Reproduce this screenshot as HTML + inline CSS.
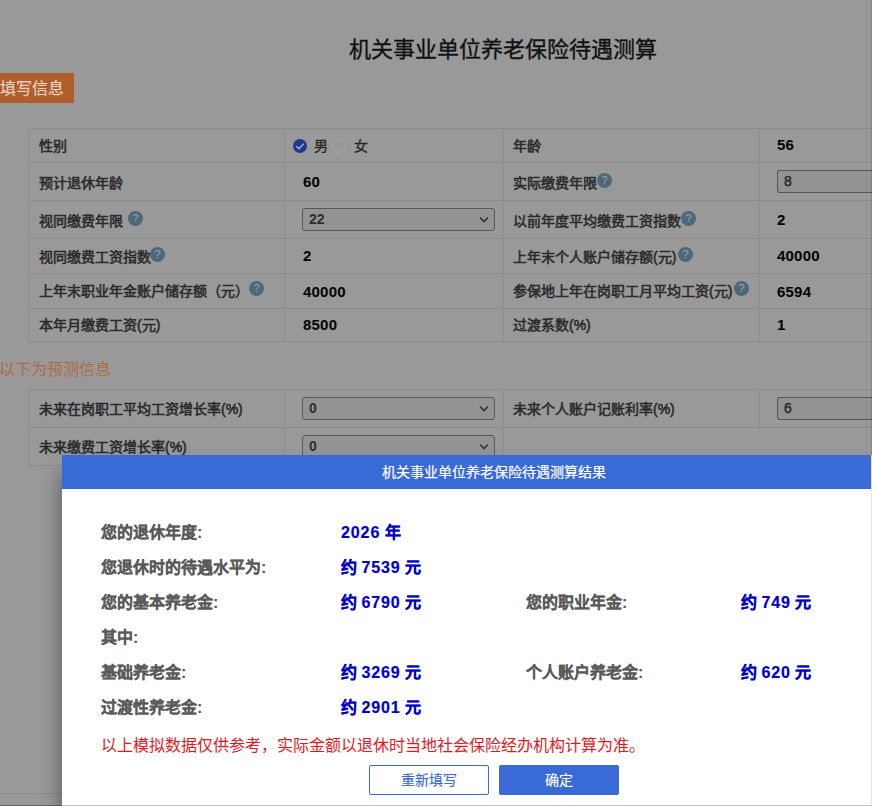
<!DOCTYPE html>
<html lang="zh-CN"><head><meta charset="utf-8">
<style>
*{margin:0;padding:0;box-sizing:border-box}
html,body{width:872px;height:806px;overflow:hidden;background:#999;font-family:"Liberation Sans",sans-serif}
.abs{position:absolute}
#title{left:349px;top:35px;font-size:22px;line-height:30px;color:#111;-webkit-text-stroke:0.35px #111;white-space:nowrap}
#tag{left:0;top:73px;width:74px;height:30px;background:#b15d2c;color:#e2d2c4;-webkit-text-stroke:0.2px #e2d2c4;font-size:16px;line-height:30px;white-space:nowrap}
#tag span{position:absolute;left:0;top:1px}
.sub{left:-1px;top:357px;font-size:16px;line-height:26px;color:#b06a46;white-space:nowrap}
.hl{background:#8c8c8c}
.vl{background:#8c8c8c}
.lbl{position:absolute;font-size:14px;font-weight:normal;color:#2a2a2a;-webkit-text-stroke:0.55px #2a2a2a;white-space:nowrap;line-height:20px}
.val{position:absolute;font-size:15px;font-weight:bold;color:#000;white-space:nowrap;line-height:20px;letter-spacing:0.2px}
.sel{position:absolute;width:193px;height:23px;border:1px solid #585858;border-radius:3px;background:#939393}
.sel span{position:absolute;left:6px;top:1px;font-size:14px;font-weight:bold;color:#2e2e2e;line-height:18px}
.sel svg{position:absolute;right:5px;top:7px}
.inp{position:absolute;width:120px;height:23px;border:1px solid #555;border-right:none;border-radius:3px 0 0 3px;background:#939393}
.inp span{position:absolute;left:6px;top:1px;font-size:14px;color:#2a2a2a;-webkit-text-stroke:0.5px #2a2a2a;line-height:18px}
.q{position:absolute;width:15px;height:15px;border-radius:50%;background:#4d6876;color:#93a8b3;font-size:11px;font-weight:normal;text-align:center;line-height:15px}
#modal{left:62px;top:455px;width:900px;height:350px;background:#fff;box-shadow:0 18px 20px rgba(0,0,0,0.45)}
#mhead{position:absolute;left:0;top:0;width:100%;height:34px;background:#3a6ad6}
#mtitle{position:absolute;left:320px;top:7px;font-size:14px;line-height:20px;color:#fff;-webkit-text-stroke:0.2px #fff;white-space:nowrap}
.ml{position:absolute;font-size:16px;font-weight:bold;color:#5a5a5a;-webkit-text-stroke:0.15px #5a5a5a;white-space:nowrap;line-height:22px}
.mv{position:absolute;font-size:16px;font-weight:bold;color:#0000cc;-webkit-text-stroke:0.2px #0000cc;white-space:nowrap;line-height:22px}
#note{left:39px;top:280px;font-size:16px;color:#e0191e;white-space:nowrap;line-height:22px}
.btn{position:absolute;top:310px;width:120px;height:30px;font-size:14px;line-height:30px;text-align:center;border-radius:2px;-webkit-text-stroke:0.15px currentColor}
.d{letter-spacing:0.9px}
</style></head><body>
<div id="title" class="abs">机关事业单位养老保险待遇测算</div>
<div id="tag" class="abs"><span>填写信息</span></div>

<!-- table 1 lines -->
<div class="abs hl" style="left:28px;top:128px;width:844px;height:1px"></div>
<div class="abs hl" style="left:28px;top:162px;width:844px;height:1px"></div>
<div class="abs hl" style="left:28px;top:200px;width:844px;height:1px"></div>
<div class="abs hl" style="left:28px;top:238px;width:844px;height:1px"></div>
<div class="abs hl" style="left:28px;top:273px;width:844px;height:1px"></div>
<div class="abs hl" style="left:28px;top:308px;width:844px;height:1px"></div>
<div class="abs hl" style="left:28px;top:341px;width:844px;height:1px"></div>
<div class="abs vl" style="left:28px;top:128px;width:1px;height:214px"></div>
<div class="abs vl" style="left:284px;top:128px;width:1px;height:214px"></div>
<div class="abs vl" style="left:503px;top:128px;width:1px;height:214px"></div>
<div class="abs vl" style="left:759px;top:128px;width:1px;height:214px"></div>

<div class="lbl" style="left:39px;top:136px">性别</div>
<div class="lbl" style="left:39px;top:173px">预计退休年龄</div>
<div class="lbl" style="left:39px;top:211px">视同缴费年限</div>
<div class="lbl" style="left:39px;top:247px">视同缴费工资指数</div>
<div class="lbl" style="left:39px;top:281px">上年末职业年金账户储存额（元）</div>
<div class="lbl" style="left:39px;top:315px">本年月缴费工资(元)</div>

<div class="lbl" style="left:513px;top:136px">年龄</div>
<div class="lbl" style="left:513px;top:173px">实际缴费年限</div>
<div class="lbl" style="left:513px;top:211px">以前年度平均缴费工资指数</div>
<div class="lbl" style="left:513px;top:247px">上年末个人账户储存额(元)</div>
<div class="lbl" style="left:513px;top:281px">参保地上年在岗职工月平均工资(元)</div>
<div class="lbl" style="left:513px;top:315px">过渡系数(%)</div>

<div class="q" style="left:128px;top:211px">?</div>
<div class="q" style="left:597px;top:173px">?</div>
<div class="q" style="left:681px;top:211px">?</div>
<div class="q" style="left:150px;top:247px">?</div>
<div class="q" style="left:678px;top:247px">?</div>
<div class="q" style="left:249px;top:281px">?</div>
<div class="q" style="left:734px;top:281px">?</div>

<!-- radio -->
<div class="abs" style="left:293px;top:139px;width:14px;height:14px;border-radius:50%;background:#22388f"></div>
<svg class="abs" style="left:293px;top:139px" width="14" height="14"><path d="M3.3 7.3 L6 9.8 L10.8 4.6" stroke="#a9b8f0" stroke-width="1.3" fill="none"/></svg>
<div class="lbl" style="left:314px;top:136px;font-weight:normal;color:#262626;-webkit-text-stroke:0.35px #262626">男</div>
<div class="abs" style="left:332px;top:139px;width:14px;height:14px;border-radius:50%;border:1px solid #a6a6a6"></div>
<div class="lbl" style="left:354px;top:136px;font-weight:normal;color:#262626;-webkit-text-stroke:0.35px #262626">女</div>

<div class="val" style="left:303px;top:172px">60</div>
<div class="sel" style="left:302px;top:208px"><span>22</span><svg width="10" height="8"><path d="M1 1.5 L5 5.5 L9 1.5" stroke="#333" stroke-width="1.6" fill="none"/></svg></div>
<div class="val" style="left:303px;top:246px">2</div>
<div class="val" style="left:303px;top:282px">40000</div>
<div class="val" style="left:303px;top:315px">8500</div>

<div class="val" style="left:777px;top:135px">56</div>
<div class="inp" style="left:777px;top:170px"><span>8</span></div>
<div class="val" style="left:777px;top:210px">2</div>
<div class="val" style="left:777px;top:246px">40000</div>
<div class="val" style="left:777px;top:282px">6594</div>
<div class="val" style="left:777px;top:315px">1</div>

<div class="abs sub">以下为预测信息</div>

<!-- table 2 -->
<div class="abs hl" style="left:28px;top:389px;width:844px;height:1px"></div>
<div class="abs hl" style="left:28px;top:427px;width:844px;height:1px"></div>
<div class="abs hl" style="left:28px;top:465px;width:844px;height:1px"></div>
<div class="abs vl" style="left:28px;top:389px;width:1px;height:77px"></div>
<div class="abs vl" style="left:284px;top:389px;width:1px;height:77px"></div>
<div class="abs vl" style="left:503px;top:389px;width:1px;height:77px"></div>
<div class="abs vl" style="left:759px;top:389px;width:1px;height:38px"></div>

<div class="lbl" style="left:39px;top:399px">未来在岗职工平均工资增长率(%)</div>
<div class="lbl" style="left:39px;top:437px">未来缴费工资增长率(%)</div>
<div class="lbl" style="left:513px;top:399px">未来个人账户记账利率(%)</div>
<div class="sel" style="left:302px;top:397px"><span>0</span><svg width="10" height="8"><path d="M1 1.5 L5 5.5 L9 1.5" stroke="#333" stroke-width="1.6" fill="none"/></svg></div>
<div class="sel" style="left:302px;top:435px"><span>0</span><svg width="10" height="8"><path d="M1 1.5 L5 5.5 L9 1.5" stroke="#333" stroke-width="1.6" fill="none"/></svg></div>
<div class="inp" style="left:777px;top:397px"><span>6</span></div>

<div id="modal" class="abs">
  <div id="mhead"><div id="mtitle">机关事业单位养老保险待遇测算结果</div></div>
  <div class="ml" style="left:39px;top:67px">您的退休年度:</div>
  <div class="mv" style="left:279px;top:67px"><span class="d">2026</span> 年</div>
  <div class="ml" style="left:39px;top:102px">您退休时的待遇水平为:</div>
  <div class="mv" style="left:279px;top:102px">约 <span class="d">7539</span> 元</div>
  <div class="ml" style="left:39px;top:137px">您的基本养老金:</div>
  <div class="mv" style="left:279px;top:137px">约 <span class="d">6790</span> 元</div>
  <div class="ml" style="left:464px;top:137px">您的职业年金:</div>
  <div class="mv" style="left:679px;top:137px">约 <span class="d">749</span> 元</div>
  <div class="ml" style="left:39px;top:172px">其中:</div>
  <div class="ml" style="left:39px;top:207px">基础养老金:</div>
  <div class="mv" style="left:279px;top:207px">约 <span class="d">3269</span> 元</div>
  <div class="ml" style="left:464px;top:207px">个人账户养老金:</div>
  <div class="mv" style="left:679px;top:207px">约 <span class="d">620</span> 元</div>
  <div class="ml" style="left:39px;top:242px">过渡性养老金:</div>
  <div class="mv" style="left:279px;top:242px">约 <span class="d">2901</span> 元</div>
  <div id="note" class="abs">以上模拟数据仅供参考，实际金额以退休时当地社会保险经办机构计算为准。</div>
  <div class="btn" style="left:307px;border:1px solid #3a6ad6;color:#3a6ad6;background:#fff;line-height:28px">重新填写</div>
  <div class="btn" style="left:437px;background:#3a6ad6;color:#fff">确定</div>
</div>
<div class="abs" style="left:0;top:793px;width:62px;height:1px;background:rgba(0,0,0,0.1)"></div>
<div class="abs" style="left:0;top:805px;width:62px;height:1px;background:rgba(0,0,0,0.35)"></div>
<div class="abs" style="left:62px;top:805px;width:810px;height:1px;background:#c4c4c4"></div>
<div class="abs" style="left:866px;top:0;width:1px;height:455px;background:rgba(0,0,0,0.05)"></div>
<div class="abs" style="left:871px;top:0;width:1px;height:455px;background:rgba(0,0,0,0.12)"></div>
<div class="abs" style="left:871px;top:455px;width:1px;height:350px;background:#e4e4e4"></div>
</body></html>
